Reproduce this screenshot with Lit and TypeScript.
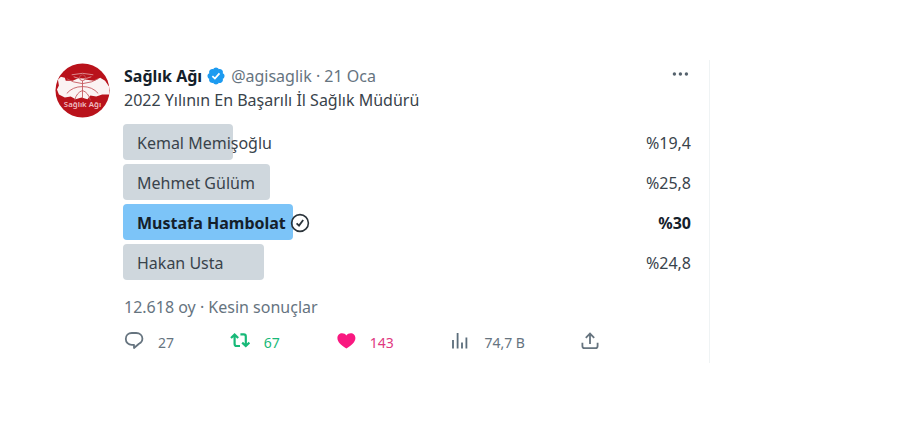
import { LitElement, html, css, svg } from "lit";
import { customElement } from "lit/decorators.js";
import { classMap } from "lit/directives/class-map.js";
import { styleMap } from "lit/directives/style-map.js";

interface Option {
  name: string;
  label: string;
  share: number;
  chosen?: boolean;
}

const options: Option[] = [
  { name: "Kemal Memişoğlu", label: "%19,4", share: 19.4 },
  { name: "Mehmet Gülüm", label: "%25,8", share: 25.8 },
  { name: "Mustafa Hambolat", label: "%30", share: 30, chosen: true },
  { name: "Hakan Usta", label: "%24,8", share: 24.8 },
];

const avatar = svg`
  <svg viewBox="0 0 56 56" width="55" height="55" role="img" aria-label="Sağlık Ağı">
    <circle cx="28" cy="28" r="27.5" fill="#b9121b" />
    <path d="M3 17 L6 14 L10 15 L11 18 L18 18 L25 15 L32 17 L40 18 L46 15 L51 18 L55 24 L55 32 L48 32 L42 34 L36 33 L33 37 L27 35 L21 37 L16 34 L10 35 L4 32 L2 27 L4 23 Z" fill="#fbf3f3" />
    <g fill="none" stroke="#c4575d" stroke-width="0.9">
      <path d="M17 12 Q28 9 39 12 M19 14 Q28 18 37 14" stroke="#e09a9d" />
      <circle cx="28" cy="15" r="3" />
      <path d="M28 18 V36 M28 21 Q18 20 12 16 M28 21 Q38 20 44 16" />
      <path d="M28 24 Q18 24 12 31 M28 24 Q38 24 44 31 M28 28 Q22 30 20 38 M28 28 Q34 30 36 38" />
    </g>
    <text class="mark" x="28" y="45" text-anchor="middle">Sağlık Ağı</text>
  </svg>`;

const verified = svg`
  <svg viewBox="0 0 22 22" width="20" height="20" role="img" aria-label="Onaylı hesap">
    <path fill="#1d9bf0" d="M20.4 11c0-.65-.2-1.27-.54-1.82-.35-.54-.84-.98-1.43-1.25.22-.61.27-1.26.14-1.9-.13-.63-.43-1.22-.88-1.69-.47-.44-1.06-.75-1.69-.88-.64-.13-1.29-.08-1.9.14-.27-.59-.7-1.08-1.25-1.43C12.3 1.82 11.67 1.63 11 1.6c-.65 0-1.27.2-1.82.57-.54.35-.97.84-1.24 1.43-.61-.22-1.26-.27-1.9-.14-.64.13-1.22.44-1.69.88-.45.47-.75 1.06-.88 1.69-.12.64-.07 1.29.15 1.9-.59.27-1.09.71-1.44 1.25-.35.55-.54 1.17-.56 1.82.02.65.21 1.28.56 1.82.35.55.85.98 1.44 1.26-.22.6-.27 1.26-.15 1.89.13.64.43 1.22.88 1.69.47.45 1.05.75 1.69.88.64.13 1.29.08 1.9-.13.27.58.7 1.08 1.24 1.43.55.34 1.17.53 1.82.55.65-.02 1.28-.2 1.82-.55.55-.35.98-.85 1.26-1.43.6.24 1.27.28 1.9.16.64-.13 1.22-.44 1.68-.9.46-.46.77-1.05.9-1.69.13-.63.08-1.28-.14-1.89.58-.28 1.08-.71 1.43-1.26.34-.54.53-1.17.54-1.82z" />
    <path fill="none" stroke="#fff" stroke-width="2" d="M7 11.2 L9.8 13.8 L14.8 8.2" />
  </svg>`;

const check = svg`
  <svg viewBox="0 0 20 20" width="20" height="20" role="img" aria-label="Seçiminiz" fill="none" stroke="#2b343b" stroke-width="1.6">
    <circle cx="10" cy="10" r="8.4" />
    <path d="M6.6 10.4 L9 12.6 L13.2 7" stroke-width="1.8" />
  </svg>`;

const reply = svg`
  <svg viewBox="0 0 20 20" width="20" height="20" fill="none" stroke="#66747f" stroke-width="1.8" stroke-linejoin="round" aria-hidden="true">
    <path d="M7.8 2 H12.2 C15.8 2 18.4 4.4 18.4 7.6 C18.4 9.8 17.2 11.8 15 12.8 L10 17 V13.8 H7.8 C4.3 13.8 1.8 11.2 1.8 7.9 C1.8 4.6 4.3 2 7.8 2 Z" />
  </svg>`;

const retweet = svg`
  <svg viewBox="0 0 20 20" width="20" height="20" fill="none" stroke="#17b978" stroke-width="2.2" aria-hidden="true">
    <path d="M1 7 L4.6 3.6 L8.2 7 M4.6 4 V13 Q4.6 15 6.6 15 H10" />
    <path d="M19.4 11.6 L15.8 15 L12.2 11.6 M15.8 15 V5.4 Q15.8 3.4 13.8 3.4 H10.4" />
  </svg>`;

const heart = svg`
  <svg viewBox="0 0 20 20" width="20" height="20" fill="#f91880" aria-hidden="true">
    <path d="M10.4 17.6 C5 14.2 1.4 11 1.4 7 C1.4 4.2 3.5 2.2 6 2.2 C7.9 2.2 9.5 3 10.4 4.4 C11.3 3 12.9 2.2 14.8 2.2 C17.3 2.2 19.4 4.2 19.4 7 C19.4 11 15.8 14.2 10.4 17.6 Z" />
  </svg>`;

const views = svg`
  <svg viewBox="0 0 20 20" width="20" height="20" fill="none" stroke="#5b6d7b" stroke-width="1.8" aria-hidden="true">
    <path d="M3 17.4 V9 M7.6 17.4 V2 M12 17.4 V11.4 M16.4 17.4 V6.4" />
  </svg>`;

const share = svg`
  <svg viewBox="0 0 20 20" width="20" height="20" fill="none" stroke="#66747f" stroke-width="1.8" aria-hidden="true">
    <path d="M10 13 V2.8 M5.8 6.8 L10 2.6 L14.2 6.8" />
    <path d="M2.4 11.8 V15 Q2.4 17.2 4.4 17.2 H15.6 Q17.6 17.2 17.6 15 V11.8" />
  </svg>`;

const dots = svg`
  <svg viewBox="0 0 20 20" width="20" height="20" fill="#55626d" aria-hidden="true">
    <circle cx="3.4" cy="8" r="1.7" /><circle cx="9.4" cy="8" r="1.7" /><circle cx="15.4" cy="8" r="1.7" />
  </svg>`;

@customElement("poll-results")
export class PollResults extends LitElement {
  static styles = css`
    :host {
      display: block;
    }
    .list {
      display: grid;
      gap: 4px;
      margin: 0;
      padding: 0;
      list-style: none;
    }
    .option {
      display: grid;
      grid-template-columns: 1fr auto;
      align-items: center;
      height: 36px;
      color: #39434b;
    }
    .bar {
      grid-area: 1 / 1 / 2 / 3;
      height: 100%;
      border-radius: 4px;
      background: #cfd7dd;
    }
    .name {
      grid-area: 1 / 1;
      display: flex;
      align-items: center;
      gap: 4px;
      padding-left: 14px;
      padding-top: 2px;
    }
    .value {
      grid-area: 1 / 2;
      padding-top: 2px;
    }
    .chosen {
      font-weight: 700;
      color: #14202a;
    }
    .chosen .bar {
      background: #7cc4f8;
    }
  `;

  render() {
    return html`<ul class="list">
      ${options.map(
        (o) => html`<li class=${classMap({ option: true, chosen: !!o.chosen })}>
          <div class="bar" style=${styleMap({ width: `${o.share}%` })}></div>
          <span class="name">${o.name}${o.chosen ? check : ""}</span>
          <span class="value">${o.label}</span>
        </li>`
      )}
    </ul>`;
  }
}

@customElement("app-root")
export class AppRoot extends LitElement {
  static styles = css`
    :host {
      display: block;
      box-sizing: border-box;
      min-height: 100vh;
      padding: 60px 190px 60px 55px;
      background: #fff;
      font-family: "Noto Sans", "Open Sans", sans-serif;
      font-size: 16px;
      line-height: 24px;
      color: #39434b;
    }
    svg {
      display: block;
      flex: none;
    }
    .post {
      display: grid;
      grid-template-columns: 56px 1fr;
      column-gap: 12px;
      padding: 3px 18px 8px 0;
      border-right: 1px solid #eff3f4;
    }
    .mark {
      font: 600 8px "Noto Sans", sans-serif;
      fill: #f0bfc2;
    }
    .head {
      display: flex;
      align-items: center;
      padding-top: 1px;
    }
    .link {
      color: inherit;
      text-decoration: none;
    }
    .author {
      font-weight: 700;
      color: #14202a;
      margin-right: 4px;
    }
    .meta {
      margin-left: 5px;
      color: #66747f;
    }
    .button {
      display: flex;
      align-items: center;
      gap: 14px;
      padding: 0;
      border: 0;
      background: none;
      font: inherit;
      font-size: 14px;
      color: #66747f;
      cursor: pointer;
    }
    .count {
      padding-top: 4px;
    }
    .more {
      margin-left: auto;
    }
    .text {
      margin: 0;
    }
    .poll {
      margin-top: 12px;
    }
    .votes {
      margin: 15px 0 0;
      color: #66747f;
    }
    .head,
    .text,
    .votes,
    .actions {
      padding-left: 1px;
    }
    .actions {
      display: grid;
      grid-template-columns: 106fr 106fr 115fr 130fr 111fr;
      margin-top: 8px;
    }
    .green {
      color: #17b978;
    }
    .pink {
      color: #e0387f;
    }
  `;

  render() {
    return html`<article class="post">
      <div>${avatar}</div>
      <div>
        <header class="head">
          <a class="link author" href="#agisaglik">Sağlık Ağı</a>
          ${verified}
          <span class="meta"><a class="link" href="#agisaglik">@agisaglik</a> · <a class="link" href="#post">21 Oca</a></span>
          <button class="button more" aria-label="Daha fazla">${dots}</button>
        </header>
        <p class="text">2022 Yılının En Başarılı İl Sağlık Müdürü</p>
        <poll-results class="poll"></poll-results>
        <p class="votes">12.618 oy · Kesin sonuçlar</p>
        <div class="actions">
          <button class="button">${reply}<span class="count">27</span></button>
          <button class="button green">${retweet}<span class="count">67</span></button>
          <button class="button pink">${heart}<span class="count">143</span></button>
          <button class="button">${views}<span class="count">74,7 B</span></button>
          <button class="button" aria-label="Paylaş">${share}</button>
        </div>
      </div>
    </article>`;
  }
}
